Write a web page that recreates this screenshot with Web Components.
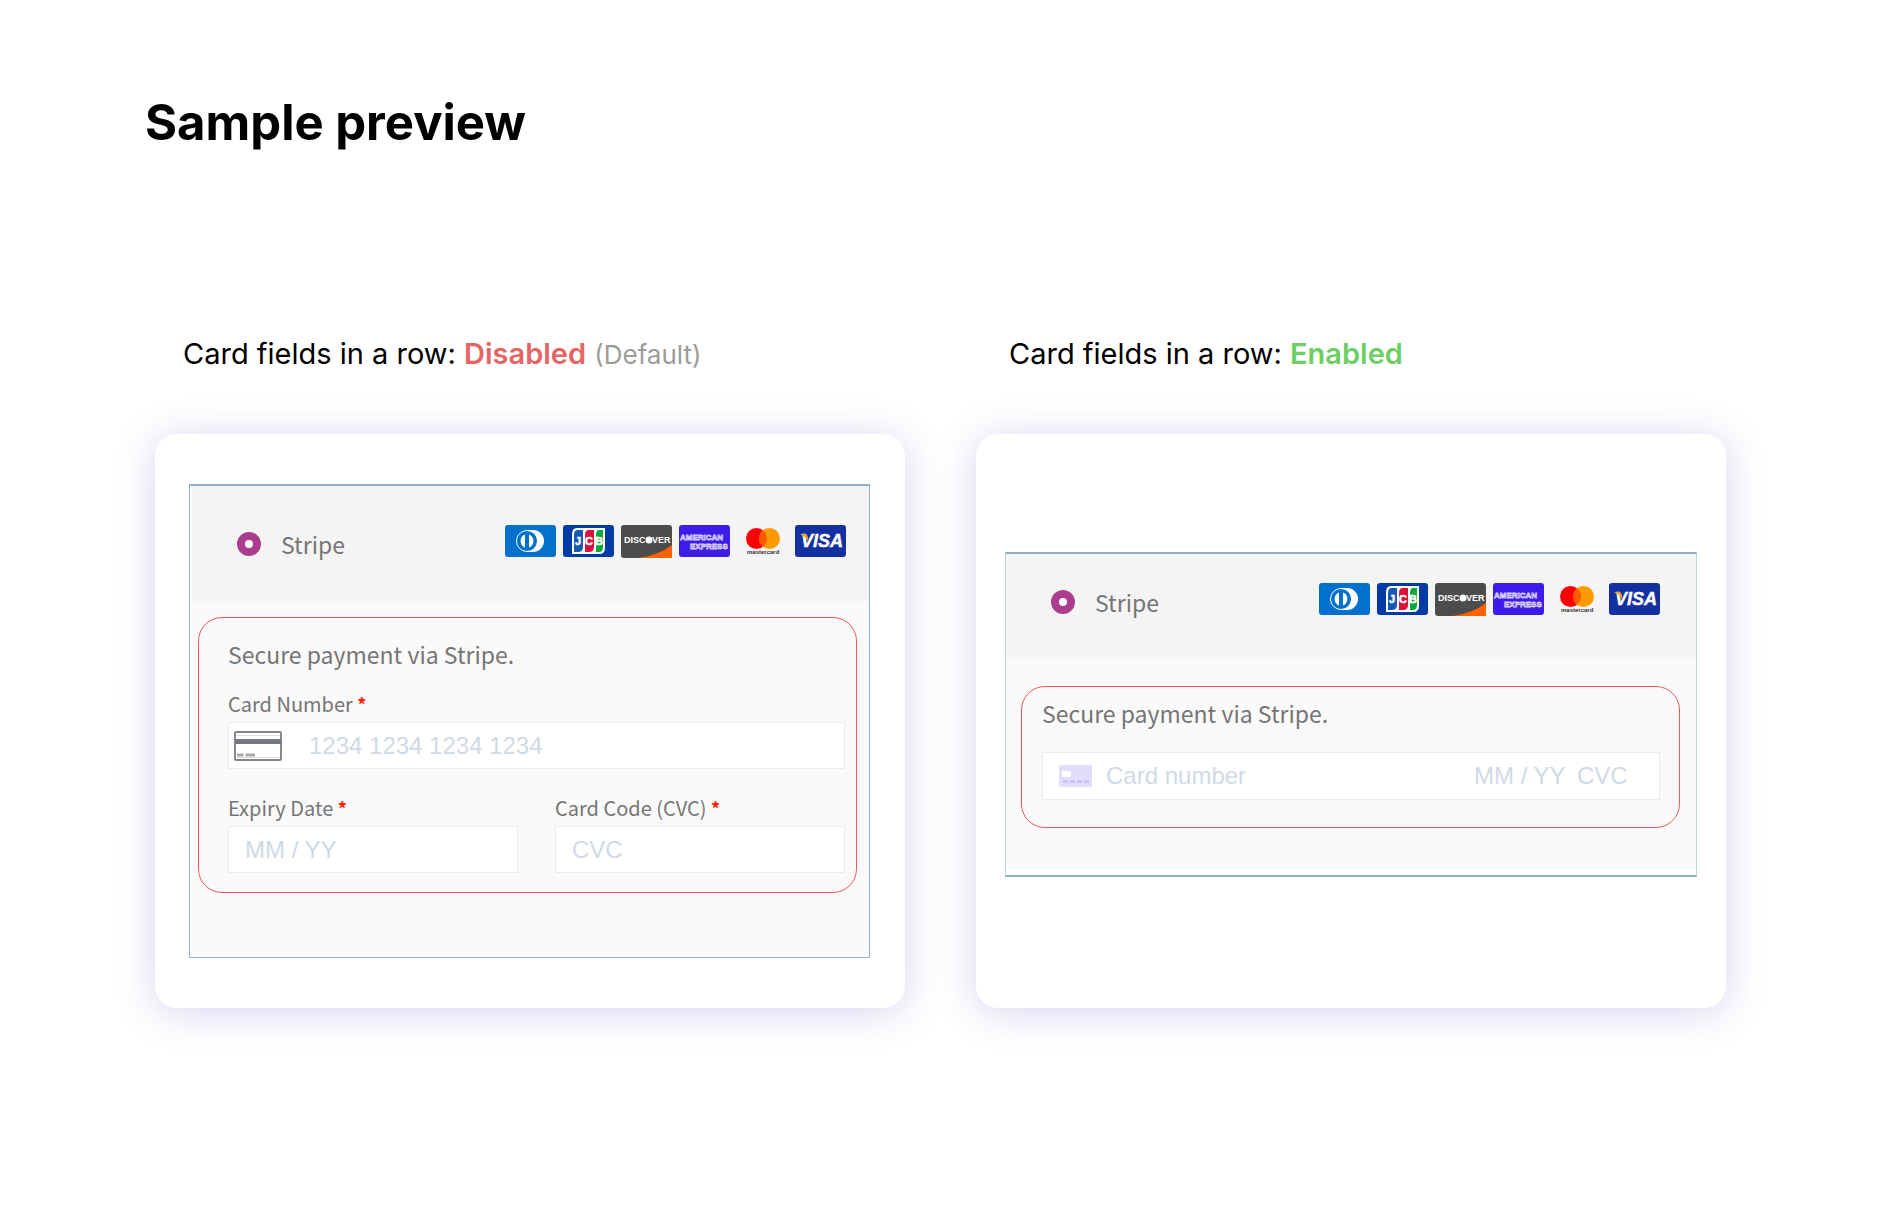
<!DOCTYPE html>
<html lang="en">
<head>
<meta charset="utf-8">
<meta name="viewport" content="width=device-width, initial-scale=1">
<title>Sample preview</title>
<style>
  body { margin: 0; background: #fff; color: #000; font-family: Inter, "Liberation Sans", sans-serif; }
</style>
</head>
<body>
<preview-page>
  <span slot="title">Sample preview</span>
  <preview-option>
    <span slot="label">Card fields in a row:</span>
    <strong slot="state">Disabled</strong>
    <small slot="note">(Default)</small>
    <payment-panel>
      <card-field label="Card Number" name="number" placeholder="1234 1234 1234 1234" icon></card-field>
      <field-pair>
        <card-field label="Expiry Date" name="expiry" placeholder="MM / YY"></card-field>
        <card-field label="Card Code (CVC)" name="cvc" placeholder="CVC"></card-field>
      </field-pair>
    </payment-panel>
  </preview-option>
  <preview-option row>
    <span slot="label">Card fields in a row:</span>
    <strong slot="state">Enabled</strong>
    <payment-panel row>
      <card-row></card-row>
    </payment-panel>
  </preview-option>
</preview-page>

<script>
  const define = (name, html, setup) => {
    const template = document.createElement('template');
    template.innerHTML = html;
    customElements.define(name, class extends HTMLElement {
      constructor() {
        super();
        this.attachShadow({ mode: 'open' }).append(template.content.cloneNode(true));
      }
      connectedCallback() { if (setup) setup(this, this.shadowRoot); }
    });
  };

  define('preview-page', `
    <style>
      :host { display: block; padding: 93px 155px 120px; }
      h1 { margin: 0 0 183px -10px; font-size: 49px; line-height: 60px; font-weight: 700; }
      main { display: grid; grid-template-columns: repeat(auto-fit, minmax(620px, 1fr)); gap: 71px; }
    </style>
    <h1><slot name="title"></slot></h1>
    <main><slot></slot></main>`);

  define('preview-option', `
    <style>
      :host { display: flex; flex-direction: column; gap: 62px; --state: #e56464; }
      :host([row]) { --state: #6dce63; }
      h2 { margin: 0; padding-left: 28px; font-size: 29px; line-height: 36px; font-weight: 400; }
      :host([row]) h2 { padding-left: 33px; }
      ::slotted(strong) { color: var(--state); font-weight: 600; }
      ::slotted(small) { color: #9b9b9b; font-size: 26px; line-height: 24px; }
      section { flex: 1; display: flex; align-items: center; padding: 50px 35px 50px 34px;
        border-radius: 22px; background: #fff; box-shadow: 0 4px 40px rgba(71, 52, 173, .21); }
      :host([row]) section { padding: 50px 29px 63px; }
    </style>
    <h2><slot name="label"></slot> <slot name="state"></slot> <slot name="note"></slot></h2>
    <section><slot></slot></section>`);

  define('payment-panel', `
    <style>
      :host { display: block; flex: 1; border: 1px solid #8fb2c2; border-top-width: 2px; box-sizing: border-box;
        padding-left: 2px; background: #fff; color: #757575;
        font: 23px/32px "Noto Sans CJK SC", sans-serif; }
      :host([row]) { border-color: #8fb2c2 #c0d2da; border-bottom-width: 2px; padding: 0 0 5px; }
      header { display: flex; justify-content: space-between; align-items: flex-start; background: #f4f4f4;
        padding: 39px 23px 43px 45px; }
      :host([row]) header { padding: 29px 36px 43px 45px; }
      .method { display: flex; align-items: center; gap: 20px; padding-top: 4px; height: 29px; }
      input { appearance: none; margin: 0; width: 24px; height: 24px; border-radius: 50%; border: 8px solid #aa3d8e;
        background: #fff; box-sizing: border-box; }
      .body { background: #fafafa; padding: 16px 12px 64px 6px; }
      :host([row]) .body { padding: 27px 16px 42px 15px; }
      fieldset { margin: 0; min-width: 0; border: 1px solid #ea5a5a; border-radius: 24px; padding: 20px 11px 19px 29px;
        display: flex; flex-direction: column; gap: 20px; }
      :host([row]) fieldset { padding: 10px 19px 27px 20px; gap: 23px; }
      p { margin: 0; }
      .fields { display: flex; flex-direction: column; gap: 25px; }
    </style>
    <header>
      <div class="method"><input type="radio" id="stripe" name="method" checked><label for="stripe">Stripe</label></div>
      <card-brands></card-brands>
    </header>
    <div class="body">
      <fieldset>
        <p>Secure payment via Stripe.</p>
        <div class="fields"><slot></slot></div>
      </fieldset>
    </div>`);

  define('field-pair', `
    <style>:host { display: grid; grid-template-columns: 1fr 1fr; gap: 37px; }</style>
    <slot></slot>`);

  define('card-field', `
    <style>
      :host { display: flex; flex-direction: column; gap: 4px; }
      label { font-size: 20px; line-height: 28px; }
      label b { color: #ff1a00; font-size: 18px; line-height: 20px; font-weight: 700; }
      .box { display: flex; align-items: center; height: 47px; box-sizing: border-box; border: 1px solid #ebebeb;
        background: #fff; padding: 0 16px; }
      :host([icon]) .box { padding-left: 5px; gap: 27px; }
      svg { display: none; flex: none; }
      :host([icon]) svg { display: block; }
      input { flex: 1; min-width: 0; width: 100%; border: 0; padding: 0; background: none; outline: 0; color: #32325d;
        font: 24px/32px "Liberation Sans", sans-serif; }
      input::placeholder { color: #cfdae6; opacity: 1; }
    </style>
    <label for="field"><span></span> <b>*</b></label>
    <div class="box">
      <svg width="48" height="30" viewBox="0 0 48 30" aria-hidden="true">
        <rect x="1" y="1" width="46" height="28" rx="1" fill="#fff" stroke="#85888d" stroke-width="2"/>
        <path d="M2 4.500H46M2 26.500H46" stroke="#dcdddf"/>
        <path d="M1 10.500H47" stroke="#74777d" stroke-width="5"/>
        <path d="M3 24H9.500M11.500 24H21" stroke="#a9a9ab" stroke-width="3"/>
      </svg>
      <input id="field" required>
    </div>`, (host, root) => {
      root.querySelector('span').textContent = host.getAttribute('label');
      const input = root.querySelector('input');
      input.name = host.getAttribute('name');
      input.placeholder = host.getAttribute('placeholder');
    });

  define('card-row', `
    <style>
      :host { display: flex; align-items: center; height: 48px; box-sizing: border-box; border: 1px solid #ebebeb;
        background: #fff; padding: 0 26px 0 16px; }
      svg { flex: none; margin-right: 14px; }
      input { min-width: 0; border: 0; padding: 0; background: none; outline: 0; color: #32325d;
        font: 24px/32px "Liberation Sans", sans-serif; }
      input::placeholder { color: #cfdae6; opacity: 1; }
      .number { flex: 1; }
      .expiry { width: 92px; margin-right: 11px; }
      .cvc { width: 56px; }
    </style>
    <svg width="33" height="22" viewBox="0 0 33 22" aria-hidden="true">
      <rect width="33" height="22" rx="2" fill="#e3dcfd"/>
      <rect x="3" y="6" width="9" height="6" rx="1" fill="#fff"/>
      <path d="M4 16.500H30" stroke="#c4b5f8" stroke-width="2" stroke-dasharray="5 2"/>
    </svg>
    <input class="number" aria-label="Card number" placeholder="Card number">
    <input class="expiry" aria-label="Expiry date" placeholder="MM / YY">
    <input class="cvc" aria-label="Card code" placeholder="CVC">`);

  define('card-brands', `
    <style>
      :host { display: flex; gap: 7px; }
      svg { display: block; overflow: hidden; }
      text { font-family: "Liberation Sans", sans-serif; font-weight: 700; }
    </style>
    <svg width="51" height="33" viewBox="0 0 51 33">
      <rect width="51" height="32" rx="3" fill="#0070cd"/>
      <path d="M22 5H28A11 11 0 0 1 28 27H22Z" fill="#fff"/>
      <circle cx="22" cy="16" r="10.500" fill="#0070cd" stroke="#fff"/>
      <path d="M20 9.500A7 7 0 0 0 20 22.500ZM24 9.500A7 7 0 0 1 24 22.500Z" fill="#fff"/>
    </svg>
    <svg width="51" height="33" viewBox="0 0 51 33">
      <rect width="51" height="32" rx="3" fill="#003aa5"/>
      <path d="M14 3H42V23Q42 29 36 29H9V9Q9 3 14 3Z" fill="#fff"/>
      <path d="M15 5H20V22Q20 27 15 27H11V10Q11 5 15 5Z" fill="#1558b5"/>
      <path d="M26 5H31V22Q31 27 26 27H22V10Q22 5 26 5Z" fill="#d9103a"/>
      <path d="M36 5H40V22Q40 27 36 27H33V10Q33 5 36 5Z" fill="#08a83c"/>
      <text x="12 22 32" y="20" font-size="11" fill="#fff" stroke="#fff" stroke-width=".5">JCB</text>
    </svg>
    <svg width="51" height="33" viewBox="0 0 51 33">
      <rect width="51" height="33" rx="3" fill="#4c4c4c"/>
      <path d="M51 20V33H18Q38 30 51 20Z" fill="#ff6000"/>
      <text x="3" y="18" font-size="9" fill="#fff">DISC</text>
      <circle cx="28" cy="15" r="3.500" fill="#fff"/>
      <text x="31" y="18" font-size="9" fill="#fff">VER</text>
    </svg>
    <svg width="51" height="33" viewBox="0 0 51 33">
      <rect width="51" height="32" rx="3" fill="#3d1be8"/>
      <g fill="#3d1be8" stroke="#d6cfff" stroke-width=".8">
        <text x="1" y="15" font-size="8">AMERICAN</text>
        <text x="11" y="24" font-size="8">EXPRESS</text>
      </g>
    </svg>
    <svg width="51" height="33" viewBox="0 0 51 33">
      <circle cx="19.500" cy="13.500" r="10.500" fill="#fb0007"/>
      <circle cx="32.500" cy="13.500" r="10.500" fill="#ff9b00"/>
      <path d="M26 5.300A10.500 10.500 0 0 1 26 21.700A10.500 10.500 0 0 1 26 5.300Z" fill="#ff5a00"/>
      <text x="10" y="29" font-size="6" fill="#333">mastercard</text>
    </svg>
    <svg width="51" height="33" viewBox="0 0 51 33">
      <rect width="51" height="32" rx="3" fill="#1430a0"/>
      <text x="6" y="22" font-size="18" font-style="italic" fill="#fff" stroke="#fff" stroke-width=".4">VISA</text>
      <path d="M5 9H10Q12 9 12.500 11L13.500 17Q11 12 5 9Z" fill="#f9a61a"/>
    </svg>`);
</script>
</body>
</html>
